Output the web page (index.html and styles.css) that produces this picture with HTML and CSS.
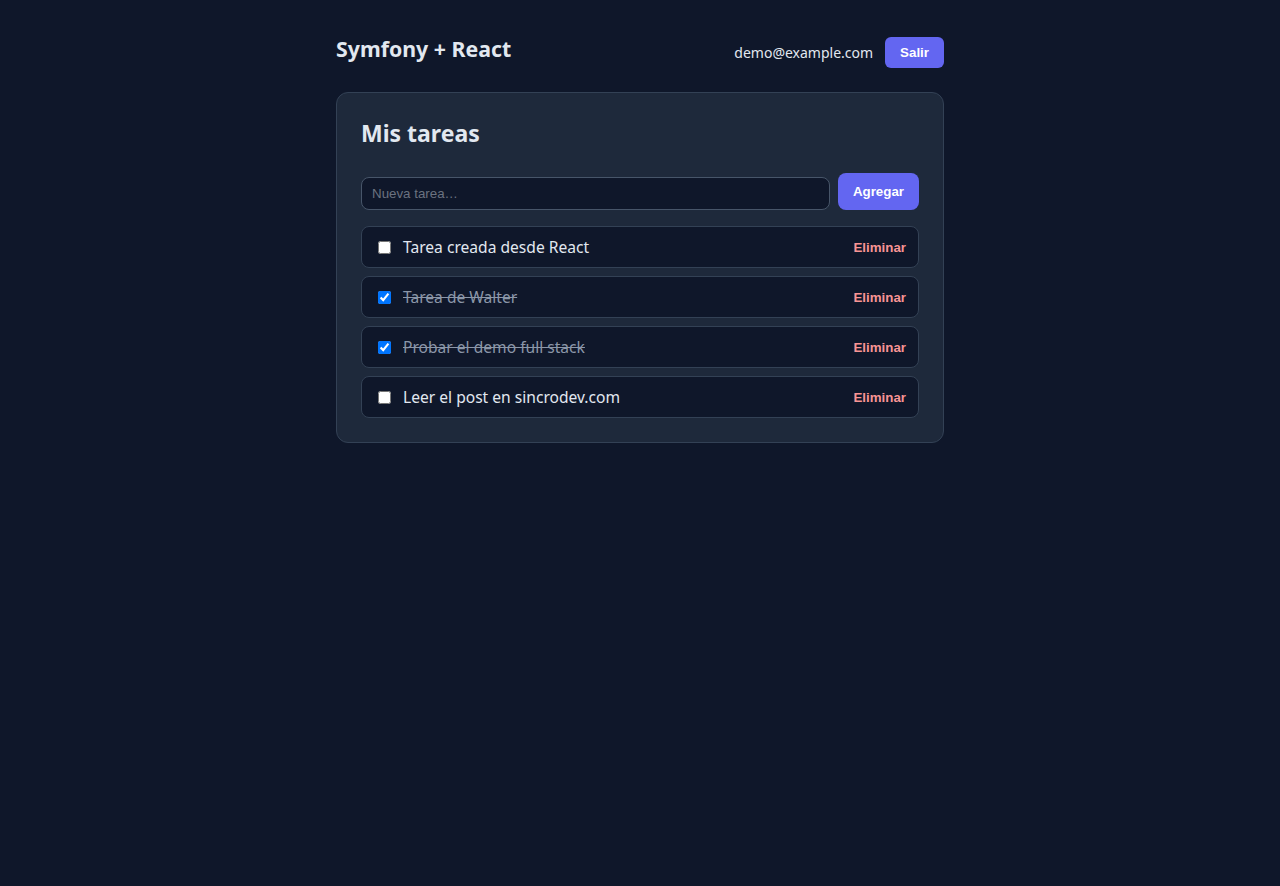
FILE: index.html
```html
<!DOCTYPE html>
<html lang="es">
<head>
    <meta charset="UTF-8">
    <meta name="viewport" content="width=device-width, initial-scale=1.0">
    <title>Symfony + React</title>
    <link rel="stylesheet" href="styles.css">
</head>
<body>

<div class="app">
    <header class="topbar">
        <h1 class="brand">Symfony + React</h1>
        <div class="user">
            <span class="user-email">demo@example.com</span>
            <button class="btn btn-small" type="button">Salir</button>
        </div>
    </header>

    <main class="card">
        <h2 class="card-title">Mis tareas</h2>

        <form class="new-task">
            <input type="text" class="new-task-input" placeholder="Nueva tarea…">
            <button type="submit" class="btn">Agregar</button>
        </form>

        <ul class="tasks">
            <li class="task">
                <input type="checkbox">
                <span class="task-title">Tarea creada desde React</span>
                <button type="button" class="task-delete">Eliminar</button>
            </li>
            <li class="task done">
                <input type="checkbox" checked>
                <span class="task-title">Tarea de Walter</span>
                <button type="button" class="task-delete">Eliminar</button>
            </li>
            <li class="task done">
                <input type="checkbox" checked>
                <span class="task-title">Probar el demo full stack</span>
                <button type="button" class="task-delete">Eliminar</button>
            </li>
            <li class="task">
                <input type="checkbox">
                <span class="task-title">Leer el post en sincrodev.com</span>
                <button type="button" class="task-delete">Eliminar</button>
            </li>
        </ul>
    </main>
</div>

</body>
</html>
```

FILE: styles.css
```css
body {
    margin: 0;
    background-color: #0f172a;
    color: #e2e8f0;
    font-family: system-ui, Ubuntu, "Open Sans", sans-serif;
}
.app {
    max-width: 608px;
    margin: 0 auto;
    padding-top: 37px;
}
.topbar {
    display: flex;
    align-items: center;
    justify-content: space-between;
    margin-bottom: 24px;
}
.brand {
    margin: 0 0 8px;
    font-size: 21.3px;
    font-weight: 700;
    line-height: 1;
}
.user {
    display: flex;
    align-items: center;
    gap: 12px;
}
.user-email {
    font-size: 14px;
}
.btn {
    background-color: #6366f1;
    color: white;
    border: none;
    border-radius: 8px;
    padding: 0 15px;
    height: 37px;
    font-family: "Liberation Sans", Arial, sans-serif;
    font-size: 13.333px;
    font-weight: 700;
    cursor: pointer;
}
.btn-small {
    height: 31px;
    border-radius: 6px;
}
.card {
    background-color: #1e293b;
    border: 1px solid #334155;
    border-radius: 12px;
    padding: 24px;
}
.card-title {
    margin: 0 0 23px;
    font-size: 23px;
    font-weight: 700;
    line-height: 33px;
}
.new-task {
    display: flex;
    align-items: flex-end;
    gap: 8px;
    margin-bottom: 16px;
}
.new-task-input {
    flex: 1;
    height: 33px;
    box-sizing: border-box;
    padding: 0 10px;
    background-color: #0f172a;
    border: 1px solid #475569;
    border-radius: 8px;
    color: #e2e8f0;
    font-family: "Liberation Sans", Arial, sans-serif;
    font-size: 13.333px;
}
.new-task-input::placeholder {
    color: #6b7280;
}
.tasks {
    list-style: none;
    margin: 0;
    padding: 0;
    display: flex;
    flex-direction: column;
    gap: 8px;
}
.task {
    display: flex;
    align-items: center;
    gap: 12px;
    height: 42px;
    box-sizing: border-box;
    padding: 0 12px 0 16px;
    background-color: #0f172a;
    border: 1px solid #334155;
    border-radius: 8px;
}
.task input {
    margin: 0;
    width: 13px;
    height: 13px;
}
.task-title {
    flex: 1;
    font-size: 15.6px;
}
.task.done .task-title {
    color: #8b96a8;
    text-decoration: line-through;
}
.task-delete {
    background: none;
    border: none;
    padding: 0;
    color: #f89494;
    font-family: "Liberation Sans", Arial, sans-serif;
    font-size: 13.333px;
    font-weight: 700;
    cursor: pointer;
}
```
